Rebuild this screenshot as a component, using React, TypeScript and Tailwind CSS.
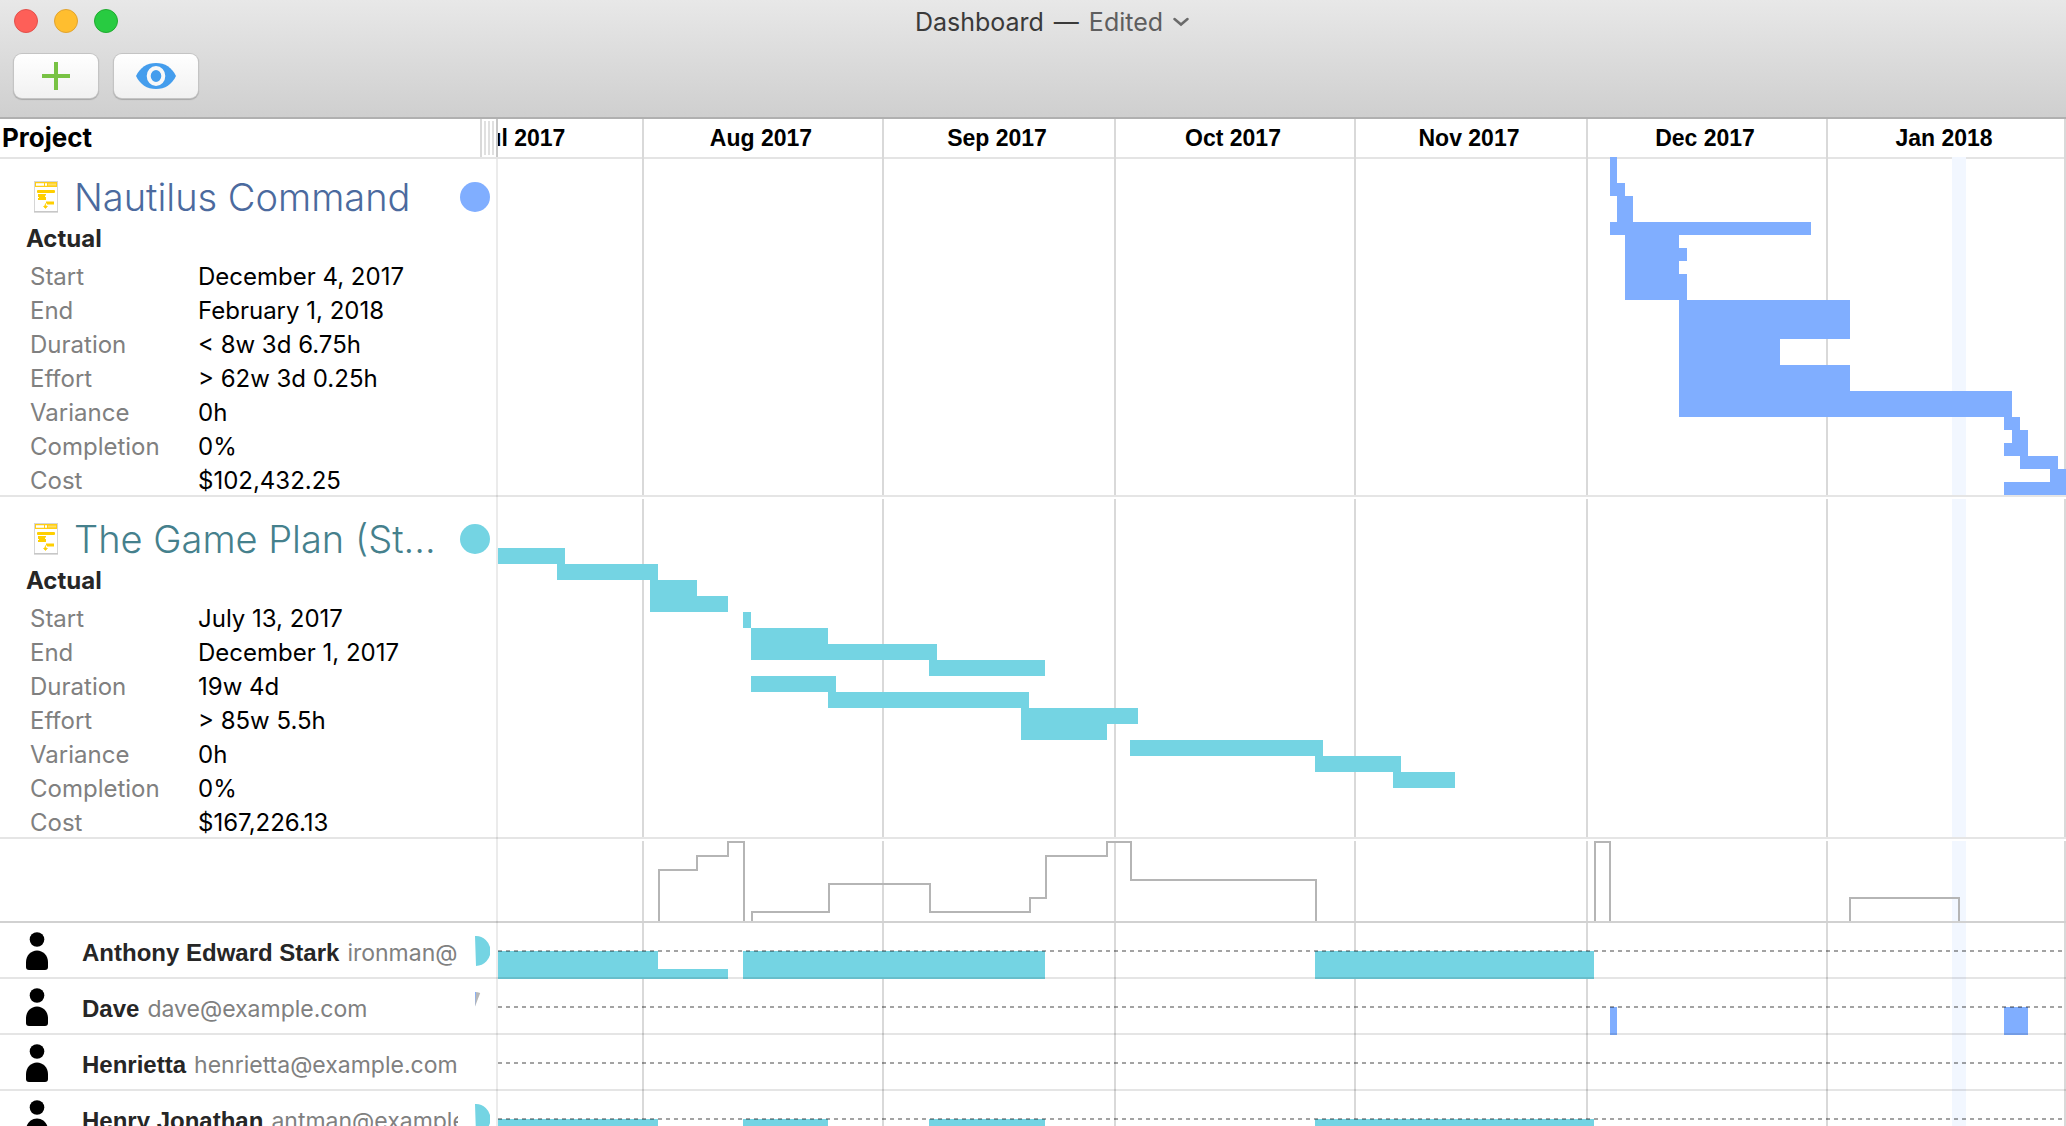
import type { ReactNode } from 'react';

type Bar = [x: number, y: number, width: number, height: number];

interface Project {
  name: string;
  titleColor: string;
  color: string;
  spacing: string;
  details: [string, string][];
  height: number;
  bars: Bar[];
}

interface Person {
  name: string;
  email: string;
  pie?: 'half' | 'sliver';
  color: string;
  bars: Bar[];
}

const BLUE = '#80aeff';
const TEAL = '#74d4e3';

// Timeline units: the visible range is 1568 wide, one day is about 7.74
const TIMELINE_WIDTH = 1568;
const MONTH_STARTS = [144, 384, 616, 856, 1088, 1328, 1566];
const MONTHS = ['Aug 2017', 'Sep 2017', 'Oct 2017', 'Nov 2017', 'Dec 2017', 'Jan 2018'];

const PROJECTS: Project[] = [
  {
    name: 'Nautilus Command',
    titleColor: 'text-[#4b6a9e]',
    color: BLUE,
    spacing: 'pt-4',
    details: [
      ['Start', 'December 4, 2017'],
      ['End', 'February 1, 2018'],
      ['Duration', '< 8w 3d 6.75h'],
      ['Effort', '> 62w 3d 0.25h'],
      ['Variance', '0h'],
      ['Completion', '0%'],
      ['Cost', '$102,432.25'],
    ],
    height: 338,
    bars: [
      [1112, -2, 7, 26],
      [1112, 24, 15, 13],
      [1119, 37, 16, 26],
      [1112, 63, 201, 13],
      [1127, 76, 54, 65],
      [1181, 89, 8, 13],
      [1181, 115, 8, 26],
      [1181, 141, 171, 39],
      [1181, 180, 101, 26],
      [1181, 206, 171, 26],
      [1181, 232, 333, 26],
      [1506, 258, 16, 13],
      [1514, 271, 16, 13],
      [1506, 284, 24, 13],
      [1522, 297, 38, 13],
      [1552, 310, 16, 13],
      [1506, 323, 62, 13],
    ],
  },
  {
    name: 'The Game Plan (St…',
    titleColor: 'text-[#45808c]',
    color: TEAL,
    spacing: 'pt-5',
    details: [
      ['Start', 'July 13, 2017'],
      ['End', 'December 1, 2017'],
      ['Duration', '19w 4d'],
      ['Effort', '> 85w 5.5h'],
      ['Variance', '0h'],
      ['Completion', '0%'],
      ['Cost', '$167,226.13'],
    ],
    height: 342,
    bars: [
      [0, 51, 67, 16],
      [59, 67, 101, 16],
      [152, 83, 47, 16],
      [152, 99, 78, 16],
      [245, 115, 8, 16],
      [253, 131, 77, 16],
      [253, 147, 186, 16],
      [431, 163, 116, 16],
      [253, 179, 85, 16],
      [330, 195, 201, 16],
      [523, 211, 117, 16],
      [523, 227, 86, 16],
      [632, 243, 193, 16],
      [817, 259, 86, 16],
      [895, 275, 62, 16],
    ],
  },
];

const PEOPLE: Person[] = [
  {
    name: 'Anthony Edward Stark',
    email: 'ironman@example.com',
    pie: 'half',
    color: TEAL,
    bars: [[0, 28, 160, 28], [160, 46, 70, 10], [245, 28, 302, 28], [817, 28, 279, 28]],
  },
  {
    name: 'Dave',
    email: 'dave@example.com',
    pie: 'sliver',
    color: BLUE,
    bars: [[1112, 28, 7, 28], [1506, 28, 24, 28]],
  },
  { name: 'Henrietta', email: 'henrietta@example.com', color: TEAL, bars: [] },
  {
    name: 'Henry Jonathan',
    email: 'antman@example.com',
    pie: 'half',
    color: TEAL,
    bars: [[0, 28, 160, 28], [245, 28, 85, 28], [431, 28, 116, 28], [817, 28, 279, 28]],
  },
];

function DocumentIcon() {
  return (
    <svg width="24" height="32" viewBox="0 0 24 32" aria-hidden="true">
      <rect x="0.5" y="0.5" width="23" height="30" fill="#fff" stroke="#d6d6d6" />
      <path d="M0 31h24" stroke="#b9b9b9" />
      <rect x="1" y="1" width="22" height="5" fill="#ffce14" />
      <path d="M2 3.5h8M11 3.5h2" stroke="#fff" strokeWidth="2.4" />
      <path d="M14 3.5h8" stroke="#ffdf66" strokeWidth="2" />
      <rect x="3" y="9" width="18" height="3" rx="1" fill="#ffcf00" />
      <path d="M4 13h8v1.500h-1v1.500h1v3H4v-2h1v-1H4z" fill="#ffcf00" />
      <path d="M12 20.500h8v3h-7v-1h-1z" fill="#ffcf00" />
      <path d="M11.500 22.500v2l2 1-2 2-2-2 1.500-1z" fill="#ffcf00" stroke="#ffcf00" strokeWidth="0.6" />
    </svg>
  );
}

function PersonIcon() {
  return (
    <svg width="22" height="38" viewBox="0 0 22 38" aria-hidden="true">
      <circle cx="11" cy="7.500" r="7.300" />
      <path d="M11 18.500c6 0 11 5 11 11.500v5c0 2-1 3-3 3H3c-2 0-3-1-3-3v-5c0-6.500 5-11.500 11-11.500z" />
    </svg>
  );
}

function Pie({ kind, color }: { kind?: 'half' | 'sliver'; color: string }) {
  return (
    <svg width="30" height="30" viewBox="0 0 30 30" className="shrink-0" aria-hidden="true">
      {kind === 'half' && <path d="M15 0a15 15 0 0 1 1 30z" fill={color} />}
      {kind === 'sliver' && (
        <>
          <path d="M15 0a15 15 0 0 1 5.200 1L15 14.500z" fill="#b8b8b8" />
          <path d="M15 0h1l-1 14.500z" fill={color} />
        </>
      )}
    </svg>
  );
}

function Timeline({ height, gridFrom = 0, gridTo, children }: { height: number; gridFrom?: number; gridTo?: number; children?: ReactNode }) {
  const gridHeight = (gridTo ?? height) - gridFrom;
  return (
    <svg
      className="block w-full overflow-visible"
      height={height}
      viewBox={`0 0 ${TIMELINE_WIDTH} ${height}`}
      preserveAspectRatio="none"
      shapeRendering="crispEdges"
      aria-hidden="true"
    >
      <rect x="1454" y={gridFrom} width="14" height={gridHeight} fill="#f2f7ff" />
      {MONTH_STARTS.map(x => (
        <rect key={x} x={x} y={gridFrom} width="2" height={gridHeight} fill="#d9d9d9" />
      ))}
      {children}
    </svg>
  );
}

function Bars({ bars, color }: { bars: Bar[]; color: string }) {
  return (
    <g fill={color}>
      {bars.map(([x, y, width, height], i) => (
        <rect key={i} x={x} y={y} width={width} height={height} />
      ))}
    </g>
  );
}

function Row({ label, strong, children }: { label?: ReactNode; strong?: boolean; children: ReactNode }) {
  return (
    <section className="relative flex">
      <div className="w-[498px] shrink-0 border-r-2 border-[#ebebeb]">{label}</div>
      <div className="min-w-0 flex-1">{children}</div>
      <div className={`absolute inset-x-0 bottom-0 h-[2px] ${strong ? 'bg-black/18' : 'bg-black/10'}`} />
    </section>
  );
}

function ProjectRow({ project, first }: { project: Project; first: boolean }) {
  return (
    <Row
      label={
        <div className={project.spacing}>
          <div className="flex h-11 items-center pr-[6px] pl-[34px]">
            <DocumentIcon />
            <h2 className={`min-w-0 flex-1 pl-4 font-['Inter',sans-serif] text-[38px] leading-[44px] font-light whitespace-nowrap ${project.titleColor}`}>
              {project.name}
            </h2>
            <svg width="30" height="30" viewBox="0 0 30 30" className="shrink-0" aria-hidden="true">
              <circle cx="15" cy="15" r="15" fill={project.color} />
            </svg>
          </div>
          <h3 className="pl-[26px] text-2xl leading-[40px] font-bold text-[#262626]">Actual</h3>
          <table className="mt-px -mb-px ml-[30px] text-left text-2xl leading-[34px]">
            <tbody>
              {project.details.map(([label, value]) => (
                <tr key={label}>
                  <th scope="row" className="w-[168px] p-0 font-normal text-[#808080]">{label}</th>
                  <td className="p-0 whitespace-nowrap text-black">{value}</td>
                </tr>
              ))}
            </tbody>
          </table>
        </div>
      }
    >
      <Timeline height={project.height} gridFrom={first ? -2 : 2} gridTo={project.height - 2}>
        <Bars bars={project.bars} color={project.color} />
      </Timeline>
    </Row>
  );
}

function PersonRow({ person }: { person: Person }) {
  return (
    <Row
      label={
        <div className="flex h-14 items-center pr-[6px] pl-[26px]">
          <PersonIcon />
          <p className="mr-[2px] ml-[34px] min-w-0 flex-1 overflow-hidden pt-[3px] text-[23px] leading-8 whitespace-nowrap">
            <span className="mr-2 font-['Liberation_Sans',Arial,sans-serif] text-[24px] font-bold text-[#262626]">{person.name}</span>
            <span className="text-[#808080]">{person.email}</span>
          </p>
          <Pie kind={person.pie} color={person.color} />
        </div>
      }
    >
      <Timeline height={56}>
        <Bars bars={person.bars} color={person.color} />
        <path d={`M0 28H${TIMELINE_WIDTH}`} stroke="#000" strokeOpacity="0.36" strokeWidth="2" strokeDasharray="4 4" />
      </Timeline>
    </Row>
  );
}

function TitleBar() {
  return (
    <header className="h-[119px] border-b-2 border-[#b0b0b0] bg-linear-to-b from-[#e8e8e8] to-[#cfcfcf]">
      <div className="flex h-[42px] items-center">
        <div className="flex w-[118px] gap-4 pl-[14px]">
          <button aria-label="Close" className="size-6 rounded-full border border-[#e2504b] bg-[#fe5f58]" />
          <button aria-label="Minimize" className="size-6 rounded-full border border-[#e1a32f] bg-[#ffbe2f]" />
          <button aria-label="Zoom" className="size-6 rounded-full border border-[#1fab2f] bg-[#28cb41]" />
        </div>
        <h1 className="flex flex-1 items-center justify-center gap-[10px] pt-[2px] text-[25px] leading-8 text-[#3a3a3a]">
          <span>Dashboard</span>
          <span>—</span>
          <button className="flex items-center gap-[10px] text-[#5e5e5e]">
            Edited
            <svg width="16" height="10" viewBox="0 0 16 10" fill="none" stroke="#6a6a6a" strokeWidth="2.500" strokeLinecap="round" aria-hidden="true">
              <path d="M1.500 2L8 7.500 14.500 2" />
            </svg>
          </button>
        </h1>
        <div className="w-20" />
      </div>
      <div className="flex gap-4 px-[14px] pt-3">
        <button aria-label="Add project" className="flex h-11 w-[84px] items-center justify-center rounded-lg bg-linear-to-b from-white to-[#f1f1f1] shadow-[0_0_0_1px_#c4c4c4,0_1px_1px_1px_#a8a8a8]">
          <svg width="28" height="28" viewBox="0 0 28 28" stroke="#78c244" strokeWidth="4" aria-hidden="true">
            <path d="M14 0v28M0 14h28" />
          </svg>
        </button>
        <button aria-label="View options" className="flex h-11 w-[84px] items-center justify-center rounded-lg bg-linear-to-b from-white to-[#f1f1f1] shadow-[0_0_0_1px_#c4c4c4,0_1px_1px_1px_#a8a8a8]">
          <svg width="40" height="26" viewBox="0 0 40 26" aria-hidden="true">
            <path d="M0 13C4 4.500 11 0 20 0s16 4.500 20 13c-4 8.500-11 13-20 13S4 21.500 0 13z" fill="#449ded" />
            <ellipse cx="20" cy="13" rx="7.300" ry="8" fill="none" stroke="#f8f8f8" strokeWidth="4" />
          </svg>
        </button>
      </div>
    </header>
  );
}

function ColumnHeader() {
  return (
    <div className="flex h-10 border-b-2 border-[#e4e4e4] leading-[38px]">
      <div className="flex w-[498px] shrink-0 border-r-2 border-[#c8c8c8]">
        <div className="flex-1 pl-[2px] text-[26px] font-bold text-black">Project</div>
        <div className="flex w-4 gap-[2px] border-l-2 border-[#d9d9d9] py-[2px] pl-[2px]">
          <i className="w-[2px] bg-[#e0e0e0]" />
          <i className="w-[2px] bg-[#e0e0e0]" />
          <i className="w-[2px] bg-[#e0e0e0]" />
        </div>
      </div>
      <div className="grid min-w-0 flex-1 grid-cols-[144fr_240fr_232fr_240fr_232fr_240fr_238fr_2fr] text-center font-['Liberation_Sans',Arial,sans-serif] text-[23px] font-bold text-black">
        <div className="flex min-w-0 justify-end overflow-hidden">
          <div className="w-[240px] shrink-0 pr-1">Jul 2017</div>
        </div>
        {MONTHS.map(month => (
          <div key={month} className="min-w-0 border-l-2 border-[#d9d9d9] pr-1">{month}</div>
        ))}
        <div className="bg-[#d9d9d9]" />
      </div>
    </div>
  );
}

export default function App() {
  return (
    <div className="h-screen overflow-hidden bg-white font-['Inter','Liberation_Sans',sans-serif]">
      <TitleBar />
      <main>
        <ColumnHeader />
        {PROJECTS.map((project, i) => (
          <ProjectRow key={project.name} project={project} first={i === 0} />
        ))}
        <Row strong>
          <Timeline height={84} gridFrom={2} gridTo={82}>
            <path
              d="M161 82V31H199V17H230V3H246V82M254 82V73H331V45H432V73H532V59H548V17H609V3H633V41H818V82M1097 82V3H1112V82M1352 82V59H1461V82"
              fill="none"
              stroke="#b5b5b5"
              strokeWidth="2"
            />
          </Timeline>
        </Row>
        {PEOPLE.map(person => (
          <PersonRow key={person.name} person={person} />
        ))}
      </main>
    </div>
  );
}
